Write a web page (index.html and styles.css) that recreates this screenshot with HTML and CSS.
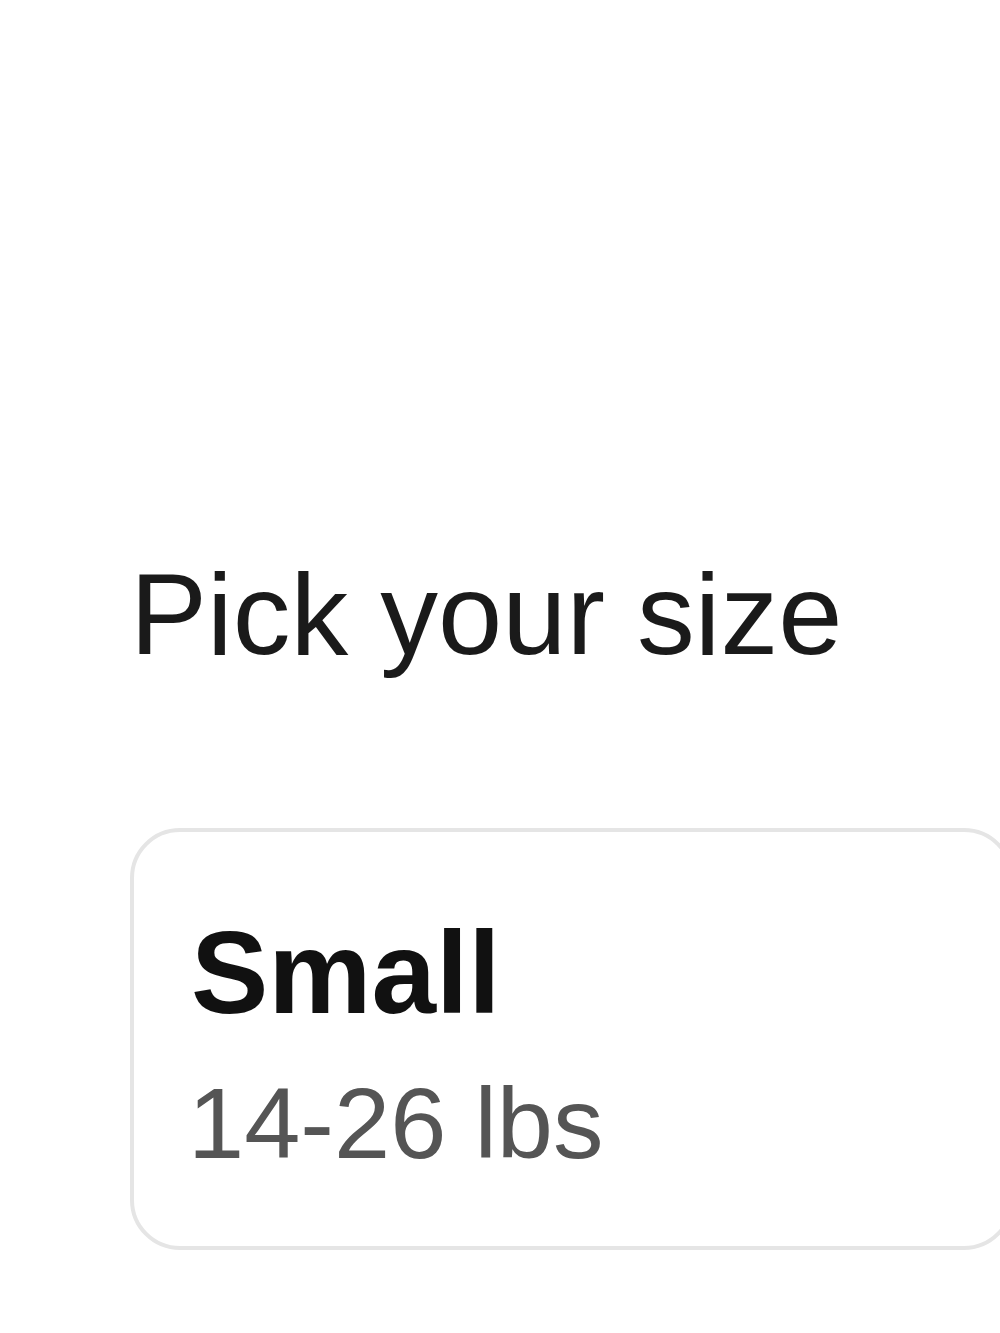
FILE: index.html
```html
<!DOCTYPE html>
<html lang="en">
<head>
<meta charset="utf-8">
<title>Pick your size</title>
<link rel="stylesheet" href="styles.css">
</head>
<body>
<main class="page">
  <h1 class="title">Pick your size</h1>
  <div class="options">
    <div class="card">
      <div class="card-name">Small</div>
      <div class="card-range">14-26 lbs</div>
    </div>
  </div>
</main>
</body>
</html>
```
FILE: styles.css
```css
html, body {
  margin: 0;
  padding: 0;
  background: #ffffff;
  overflow: hidden;
}
body {
  font-family: "Liberation Sans", Arial, Helvetica, sans-serif;
  width: 1000px;
  height: 1333px;
}
.page {
  padding-top: 545px;
  padding-left: 129px;
}
.title {
  margin: 0 0 0 1px;
  font-size: 115.5px;
  line-height: 138px;
  font-weight: 400;
  color: #1a1a1a;
  white-space: nowrap;
}
.options {
  margin-top: 145px;
  display: flex;
}
.card {
  flex: 0 0 auto;
  box-sizing: border-box;
  width: 884px;
  margin-left: 1px;
  border: 4px solid #e5e5e5;
  border-radius: 50px;
  padding: 72px 0 63px 57px;
}
.card-name {
  font-size: 116px;
  line-height: 138px;
  font-weight: 700;
  color: #111111;
}
.card-range {
  margin-top: 21px;
  margin-left: -3px;
  font-size: 101px;
  line-height: 120px;
  color: #555555;
}
```
